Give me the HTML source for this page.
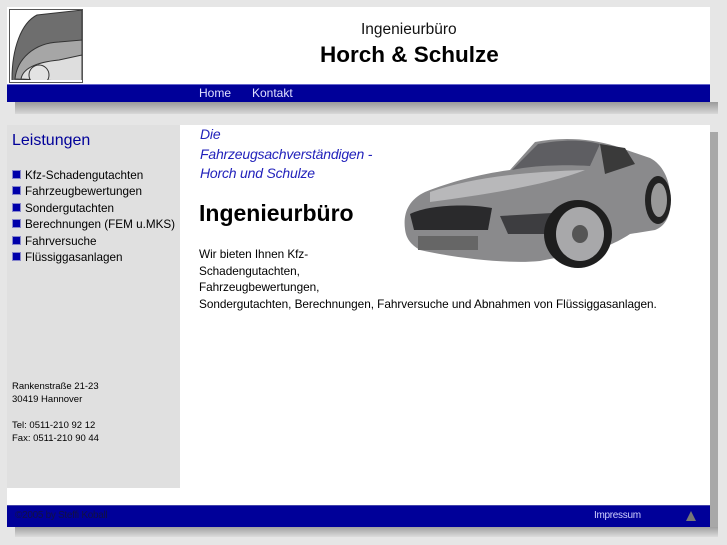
<!DOCTYPE html>
<html><head><meta charset="utf-8"><style>
*{margin:0;padding:0}
body{width:727px;height:545px;background:#e6e6e6;font-family:"Liberation Sans",sans-serif;position:relative;overflow:hidden}
.a{position:absolute}
.b{display:inline-block;width:7px;height:7px;background:#0000aa;border:1px solid #8888cc;margin-right:4px;vertical-align:0}
</style></head><body>
<div class="a" style="left:15px;top:102px;width:703px;height:12px;background:linear-gradient(#9a9a9a,#d8d8d8)"></div>
<div class="a" style="left:710px;top:132px;width:8px;height:395px;background:#a8a8a8"></div>
<div class="a" style="left:15px;top:527px;width:703px;height:10px;background:linear-gradient(#a0a0a0,#dcdcdc)"></div>
<div class="a" style="left:7px;top:7px;width:703px;height:77px;background:#fff"></div>
<svg class="a" style="left:9px;top:9px" width="74" height="74" viewBox="0 0 74 74">
<rect x="0.5" y="0.5" width="73" height="73" fill="#fff" stroke="#555"/>
<path d="M3 70 C3 40 12 14 28 6 L73 1 L73 73 L3 73Z" fill="#6e6e6e" stroke="#333"/>
<path d="M6 70 C8 50 25 34 50 33 L73 31 L73 73Z" fill="#a6a6a6" stroke="#333"/>
<path d="M12 70 C14 58 30 53 50 51 L73 46 L73 73Z" fill="#dedede" stroke="#333"/>
<circle cx="30" cy="66" r="10" fill="#e3e3e3" stroke="#333"/>
<rect x="0" y="71" width="74" height="3" fill="#fff"/>
<rect x="0.5" y="0.5" width="73" height="73" fill="none" stroke="#555"/>
</svg>
<div class="a" style="left:361px;top:21px;font-size:15.5px;color:#111">Ingenieurbüro</div>
<div class="a" style="left:320px;top:42px;font-size:22.5px;font-weight:bold;color:#000">Horch &amp; Schulze</div>
<div class="a" style="left:7px;top:84px;width:703px;height:18px;background:#000099;border-top:1px solid #6666cc;box-sizing:border-box"></div>
<div class="a" style="left:199px;top:86px;font-size:12px;color:#e0e0ff">Home</div>
<div class="a" style="left:252px;top:86px;font-size:12px;color:#e0e0ff">Kontakt</div>
<div class="a" style="left:7px;top:125px;width:703px;height:380px;background:#fff"></div>
<div class="a" style="left:7px;top:125px;width:173px;height:363px;background:#e0e0e0"></div>
<div class="a" style="left:12px;top:132px;font-size:16px;color:#000099">Leistungen</div>
<div class="a" style="left:12px;top:168px;font-size:11.7px;line-height:16.4px;color:#000">
<div><span class="b"></span>Kfz-Schadengutachten</div>
<div><span class="b"></span>Fahrzeugbewertungen</div>
<div><span class="b"></span>Sondergutachten</div>
<div><span class="b"></span>Berechnungen (FEM u.MKS)</div>
<div><span class="b"></span>Fahrversuche</div>
<div><span class="b"></span>Flüssiggasanlagen</div>
</div>
<div class="a" style="left:12px;top:380px;font-size:9.5px;line-height:13px;color:#000">Rankenstraße 21-23<br>30419 Hannover<br><br>Tel: 0511-210 92 12<br>Fax: 0511-210 90 44</div>
<div class="a" style="left:200px;top:125px;font-size:14px;line-height:19.5px;font-style:italic;color:#2222bb;letter-spacing:-0.2px">Die<br>Fahrzeugsachverständigen -<br>Horch und Schulze</div>
<div class="a" style="left:199px;top:200px;font-size:23px;font-weight:bold;color:#000">Ingenieurbüro</div>
<div class="a" style="left:199px;top:246px;font-size:11.8px;line-height:16.5px;color:#000;letter-spacing:-0.05px">Wir bieten Ihnen Kfz-<br>Schadengutachten,<br>Fahrzeugbewertungen,<br>Sondergutachten, Berechnungen, Fahrversuche und Abnahmen von Flüssiggasanlagen.</div>
<svg class="a" style="left:400px;top:134px" width="275" height="136" viewBox="0 0 275 136">
<path d="M5 95 C3 80 8 66 25 58 C50 48 80 40 110 36 L135 8 C160 3 190 4 215 12 L250 24 C262 30 270 45 270 62 C272 80 266 92 255 96 L230 100 C215 110 195 118 175 120 L140 127 C110 130 60 125 20 116 C10 110 6 104 5 95Z" fill="#8a8a8c"/>
<path d="M112 36 L138 10 C165 5 185 6 200 10 L190 32 C160 30 130 32 112 36Z" fill="#5e5e62"/>
<path d="M200 10 L225 14 L235 30 L205 40Z" fill="#3a3a3a"/>
<path d="M30 58 C70 44 120 38 185 36 C150 50 90 60 30 68Z" fill="#b8b8ba"/>
<path d="M10 80 C30 70 70 70 92 74 L88 96 L14 96Z" fill="#2a2a2c"/>
<path d="M100 82 L170 78 L160 100 L108 100Z" fill="#3d3d40"/>
<ellipse cx="178" cy="100" rx="34" ry="34" fill="#1e1e1e"/>
<ellipse cx="180" cy="100" rx="24" ry="27" fill="#a8a8aa"/>
<ellipse cx="180" cy="100" rx="8" ry="9" fill="#555"/>
<ellipse cx="258" cy="66" rx="13" ry="24" fill="#222"/>
<ellipse cx="259" cy="66" rx="8" ry="17" fill="#999"/>
<rect x="18" y="102" width="60" height="14" fill="#666"/>
</svg>
<div class="a" style="left:7px;top:505px;width:703px;height:22px;background:#000099;border-top:1px solid #4444aa;box-sizing:border-box"></div>
<div class="a" style="left:15px;top:510px;font-size:10px;color:#111144;letter-spacing:-0.3px">©2005 by Steffi Koball</div>
<div class="a" style="left:594px;top:510px;font-size:10px;color:#d0d0ff;letter-spacing:-0.3px">Impressum</div>
<svg class="a" style="left:685px;top:510px" width="12" height="12"><path d="M6 1 L11 11 L1 11Z" fill="#777"/></svg>
</body></html>
